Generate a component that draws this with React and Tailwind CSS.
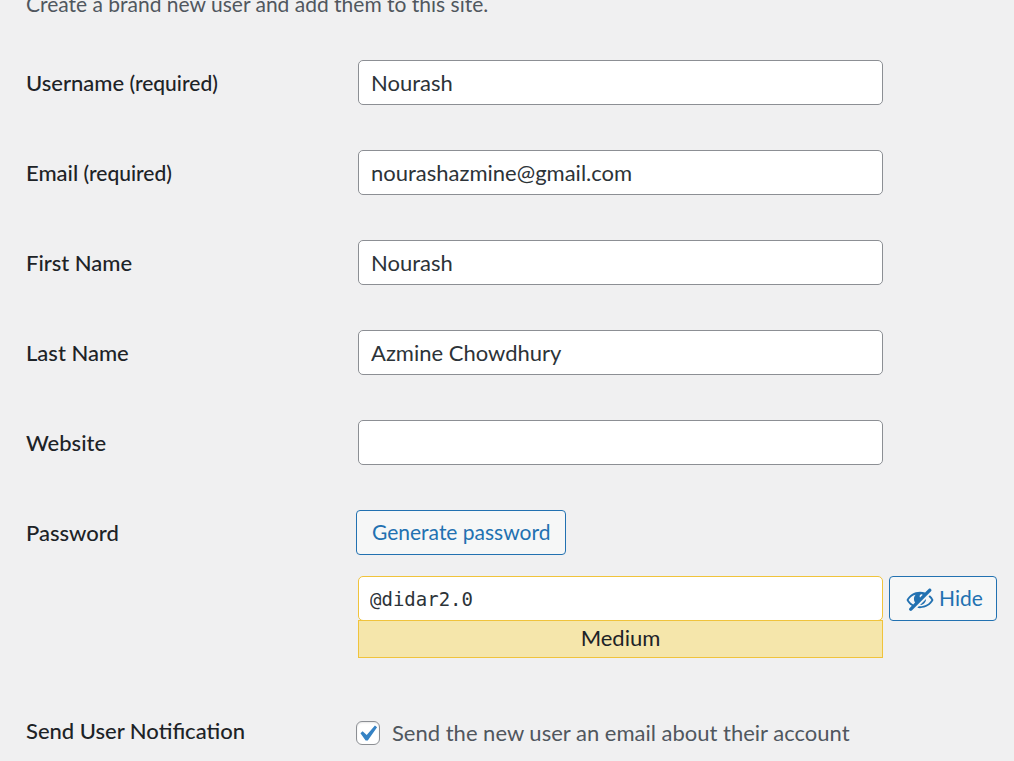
import { useState } from "react";

const fields = [
  { id: "username", label: "Username", required: true, type: "text", value: "Nourash" },
  { id: "email", label: "Email", required: true, type: "email", value: "nourashazmine@gmail.com" },
  { id: "first-name", label: "First Name", type: "text", value: "Nourash" },
  { id: "last-name", label: "Last Name", type: "text", value: "Azmine Chowdhury" },
  { id: "website", label: "Website", type: "url", value: "" },
];

function Row({ id, label, required, children }) {
  return (
    <div className="grid grid-cols-[330px_minmax(0,1fr)] items-start">
      <label htmlFor={id} className="pt-[9px] text-[22px] leading-7 font-medium text-[#1d2327]">
        {label}
        {required && <span className="text-[21px]"> (required)</span>}
      </label>
      {children}
    </div>
  );
}

function HiddenIcon() {
  return (
    <svg viewBox="0 0 20 20" className="size-[30px] shrink-0" fill="currentColor" aria-hidden="true">
      <path d="M17.2 3.3l.16.17c.39.39.39 1.02 0 1.41L4.55 17.7c-.39.39-1.03.39-1.41 0l-.17-.17c-.39-.39-.39-1.02 0-1.41l1.59-1.6c-1.57-1-2.76-2.3-3.56-3.93.81-1.65 2.03-2.98 3.64-3.99S8.04 5.09 10 5.09c1.2 0 2.33.21 3.4.6l2.38-2.39c.39-.39 1.03-.39 1.42 0zm-7.09 4.01c-.23.25-.34.54-.34.88 0 .31.12.58.31.81l1.8-1.79c-.13-.12-.28-.21-.45-.26-.11-.01-.28-.03-.49-.04-.33.03-.6.16-.83.4zM2.4 10.59c.69 1.23 1.71 2.25 3.05 3.05l1.28-1.28c-.51-.69-.77-1.47-.77-2.36 0-1.06.36-1.98 1.09-2.76-1.04.27-1.96.7-2.76 1.26-.8.58-1.43 1.27-1.89 2.09zm13.22-2.13l.96-.96c1.02.86 1.83 1.89 2.42 3.09-.81 1.65-2.03 2.98-3.64 3.99s-3.4 1.51-5.36 1.51c-.63 0-1.24-.07-1.83-.18l1.07-1.07c.25.02.5.05.76.05 1.63 0 3.13-.4 4.5-1.21s2.4-1.84 3.1-3.09c-.46-.82-1.09-1.51-1.89-2.09-.03-.01-.06-.03-.09-.04zm-5.58 5.58l4-4c-.01 1.1-.41 2.04-1.18 2.81-.78.78-1.72 1.18-2.82 1.19z" />
    </svg>
  );
}

export default function App() {
  const [notify, setNotify] = useState(true);
  const [visible, setVisible] = useState(true);

  return (
    <main className="min-h-screen overflow-hidden bg-[#f0f0f1] pr-4 pb-3 pl-[26px] font-['Lato','Open_Sans',sans-serif]">
      <p className="-mt-3 text-[21px] leading-8 text-[#50575e]">
        Create a brand new user and add them to this site.
      </p>

      <form className="mt-10 flex flex-col gap-[45px]" onSubmit={(e) => e.preventDefault()}>
        {fields.map((f) => (
          <Row key={f.id} id={f.id} label={f.label} required={f.required}>
            <input
              id={f.id}
              type={f.type}
              defaultValue={f.value}
              className="ml-0.5 h-[45px] w-full max-w-[525px] rounded-[5px] border border-[#8c8f94] bg-white px-3 text-[22px] text-[#2c3338]"
            />
          </Row>
        ))}

        <Row id="password" label="Password">
          <div className="flex flex-col items-start">
            <button
              type="button"
              className="h-[45px] rounded-[4px] border border-[#2271b1] bg-[#f6f7f7] px-[15px] pb-0.5 text-[21px] text-[#2271b1]"
            >
              Generate password
            </button>
            <div className="mt-[21px] flex w-full items-start gap-1.5 pl-0.5">
              <div className="w-full max-w-[525px] min-w-0">
                <input
                  id="password"
                  type={visible ? "text" : "password"}
                  defaultValue="@didar2.0"
                  className="block h-[45px] w-full rounded-[5px] border border-[#f0c33c] bg-white px-[11px] font-['DejaVu_Sans_Mono',monospace] text-[19px] text-[#2c3338]"
                />
                <div className="-mt-px flex h-[38px] items-center justify-center border border-[#f0c33c] bg-[#f5e6ab] pb-1 text-[22px] text-[#1d2327]">
                  Medium
                </div>
              </div>
              <button
                type="button"
                onClick={() => setVisible(!visible)}
                className="flex h-[45px] shrink-0 items-center gap-1 rounded-[4px] border border-[#2271b1] bg-[#f6f7f7] pr-[13px] pl-[15px] text-[21px] text-[#2271b1]"
              >
                <HiddenIcon />
                <span className="pb-0.5">{visible ? "Hide" : "Show"}</span>
              </button>
            </div>
          </div>
        </Row>

        <div className="mt-[5px]">
          <Row id="notification" label="Send User Notification">
            <div className="flex items-center gap-3 pt-[9px]">
              <span className="grid place-items-center">
                <input
                  id="notification"
                  type="checkbox"
                  checked={notify}
                  onChange={(e) => setNotify(e.target.checked)}
                  className="col-start-1 row-start-1 size-6 appearance-none rounded-[6px] border border-[#8c8f94] bg-white shadow-[inset_0_1px_2px_rgba(0,0,0,0.1)]"
                />
                {notify && (
                  <svg
                    viewBox="3 2 15 15"
                    className="pointer-events-none col-start-1 row-start-1 size-6"
                    fill="#3582c4"
                    aria-hidden="true"
                  >
                    <path d="M14.83 4.89l1.34.94-5.81 8.38H9.02L5.78 9.67l1.34-1.25 2.57 2.4z" />
                  </svg>
                )}
              </span>
              <label htmlFor="notification" className="text-[22px] leading-8 text-[#50575e]">
                Send the new user an email about their account
              </label>
            </div>
          </Row>
        </div>
      </form>
    </main>
  );
}
